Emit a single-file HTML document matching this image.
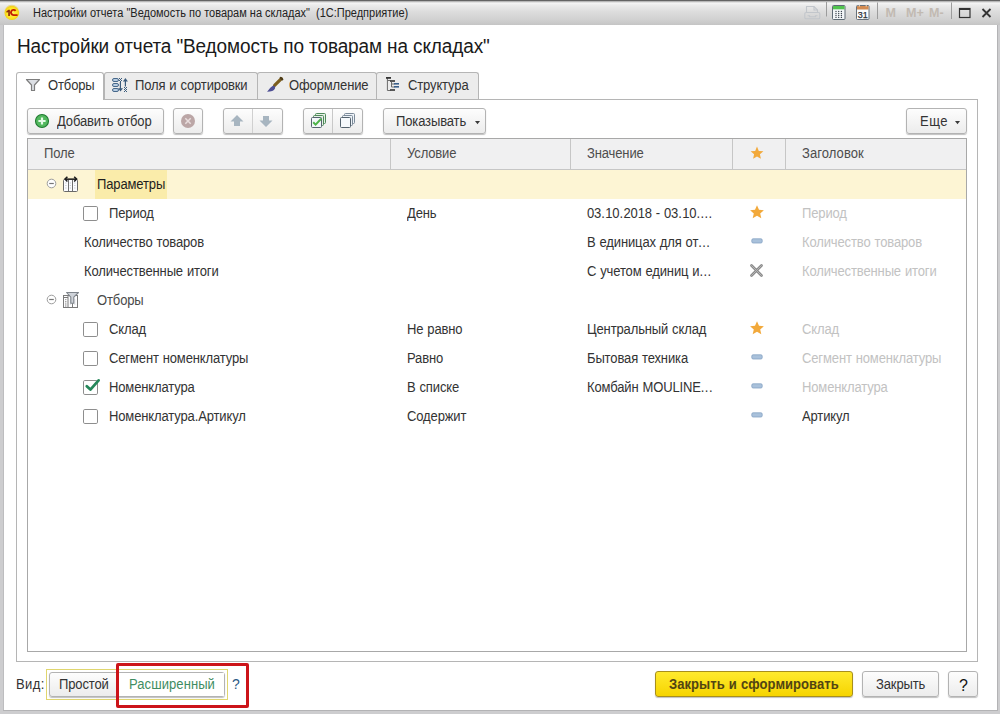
<!DOCTYPE html>
<html><head><meta charset="utf-8">
<style>
*{margin:0;padding:0;box-sizing:border-box}
html,body{width:1000px;height:714px;overflow:hidden;background:#cdcdcf;font-family:"Liberation Sans",sans-serif;color:#333}
.a{position:absolute}
#tb{left:0;top:0;width:1000px;height:25px;background:linear-gradient(#5e5e5e 0,#6a6a6a 1px,#b8b8b8 1.5px,#f6f6f6 3px,#ececec 5px,#dcdcdc 12px,#d2d2d2 19px,#c7c7c7 24px,#c4c4c4 25px)}
#content{left:4px;top:25px;width:993px;height:685px;background:#fff}
.t13{font-size:14px;line-height:15px;white-space:nowrap;letter-spacing:-0.15px;word-spacing:0.5px;transform:scaleX(0.93);transform-origin:0 0}
.tab{height:27px;top:72px;border:1px solid #b5b5b5;border-bottom:none;border-radius:3px 3px 0 0;background:#ececec}
.btn{border:1px solid #b3b3b3;border-radius:3px;background:linear-gradient(#fdfdfd,#ececec);box-shadow:0 1px 1px rgba(0,0,0,.25)}
.hdr{color:#4d4d4d}
.vsep{width:1px;background:#c6c6c6}
.d{letter-spacing:0.45px}
</style></head><body>
<div id="tb" class="a"></div>
<div class="a" style="left:3px;top:25px;width:1px;height:686px;background:#bdbdbf"></div>
<div class="a" style="left:997px;top:25px;width:1px;height:686px;background:#b3b3b5"></div>
<div class="a" style="left:3px;top:710px;width:995px;height:1px;background:#b3b3b5"></div>
<div id="content" class="a"></div>

<!-- title bar -->
<svg class="a" style="left:3px;top:4px" width="18" height="18" viewBox="0 0 18 18">
  <defs><radialGradient id="lg" cx="50%" cy="55%" r="50%"><stop offset="0" stop-color="#fff46a"/><stop offset="0.65" stop-color="#ffe624"/><stop offset="0.9" stop-color="#f2d21c"/><stop offset="1" stop-color="#e9d78a"/></radialGradient></defs>
  <circle cx="8.8" cy="8.4" r="7.6" fill="url(#lg)"/>
  <path d="M3.2 7.4L5.4 5.7H6.9V11.9H5.2V7.9L3.8 8.7z" fill="#8e2c0a"/>
  <path d="M12.6 6.9A2.6 2.6 0 1 0 10.5 11.1H14.6" fill="none" stroke="#c41d02" stroke-width="1.9"/>
</svg>

<div class="a" style="left:33px;top:6.65px;font-size:12px;line-height:13px;white-space:nowrap;color:#222;transform:scaleX(0.916);transform-origin:0 0">Настройки отчета "Ведомость по товарам на складах"&nbsp; (1С:Предприятие)</div>

<!-- title bar tools -->
<svg class="a" style="left:800px;top:0" width="200" height="25">
  <!-- printer (disabled) -->
  <g fill="none" stroke="#c2c6cb" stroke-width="1.1">
    <path d="M6.5 12.5V6.5h7.5l3.5 3.5v2.5"/>
    <path d="M14 6.5v3.5h3.5"/>
    <rect x="4.8" y="12.5" width="15" height="6.3" rx="1.3"/>
    <path d="M7.5 15.8h2v1h6v-1h2"/>
  </g>
  <path d="M26.5 2v14.5" stroke="#9c9c9c"/>
  <!-- calculator -->
  <rect x="32.5" y="5.5" width="12.5" height="14" rx="1" fill="#f3f6f8" stroke="#5f6b75"/>
  <rect x="33" y="6" width="11.5" height="3.3" fill="#52c44f"/>
  <g fill="#3d4650"><circle cx="36" cy="11.4" r="0.7"/><circle cx="38.7" cy="11.4" r="0.7"/><circle cx="41.4" cy="11.4" r="0.7"/><circle cx="36" cy="13.5" r="0.7"/><circle cx="38.7" cy="13.5" r="0.7"/><circle cx="41.4" cy="13.5" r="0.7"/><circle cx="36" cy="15.5" r="0.7"/><circle cx="38.7" cy="15.5" r="0.7"/><circle cx="41.4" cy="15.5" r="0.7"/><circle cx="36" cy="17.4" r="0.7"/><circle cx="38.7" cy="17.4" r="0.7"/><circle cx="41.4" cy="17.4" r="0.7"/></g>
  <!-- calendar -->
  <rect x="56.5" y="5.5" width="12.5" height="14" rx="1" fill="#fbfcfd" stroke="#66707a"/>
  <rect x="57" y="6" width="11.5" height="3.5" fill="#d28b52"/>
  <path d="M59.3 4.6v2M66.2 4.6v2" stroke="#f2e2d0" stroke-width="1"/>
  <text x="62.8" y="17.6" font-family="Liberation Sans" font-size="9" text-anchor="middle" fill="#2e3338" stroke="#2e3338" stroke-width="0.25">31</text>
  <path d="M77.5 2.5v16.5" stroke="#9c9c9c"/>
  <text x="85.5" y="17.3" font-family="Liberation Sans" font-weight="bold" font-size="12.6" fill="#c2bab2">M</text>
  <text x="106" y="17.3" font-family="Liberation Sans" font-weight="bold" font-size="12.6" fill="#c2bab2">M+</text>
  <text x="129" y="17.3" font-family="Liberation Sans" font-weight="bold" font-size="12.6" fill="#c2bab2">M-</text>
  <path d="M151.5 2.5v16.5" stroke="#9c9c9c"/>
  <rect x="159.5" y="8.5" width="10.5" height="9" fill="none" stroke="#333" stroke-width="1.2"/>
  <path d="M159.5 9.2h10.5" stroke="#333" stroke-width="1.6"/>
  <path d="M182.5 9l8 8M190.5 9l-8 8" stroke="#333" stroke-width="1.8"/>
</svg>

<!-- big title -->
<div class="a" style="left:17px;top:35.3px;font-size:19.5px;line-height:22px;letter-spacing:-0.12px;color:#1a1a1a;white-space:nowrap;transform:scaleX(0.974);transform-origin:0 0">Настройки отчета "Ведомость по товарам на складах"</div>

<!-- panel -->
<div class="a" style="left:16px;top:99px;width:962px;height:563px;border:1px solid #b5b5b5;background:#fff"></div>

<!-- tabs -->
<div class="a tab" style="left:104px;width:154px"></div>
<div class="a tab" style="left:257px;width:120px"></div>
<div class="a tab" style="left:376px;width:103px"></div>
<div class="a tab" style="left:16px;width:88px;height:28px;background:#fff"></div>
<svg class="a" style="left:24px;top:76px" width="20" height="18"><path d="M2.5 3.5h13l-5 5.5v5.5h-3V9z" fill="#dcdfe4" stroke="#7e7e7e" stroke-width="1.2" stroke-linejoin="round"/></svg>
<div class="a t13" style="left:48px;top:78px">Отборы</div>
<svg class="a" style="left:108px;top:74px" width="24" height="22" viewBox="0 0 24 22">
  <g fill="#b8cde2" stroke="#47688a" stroke-width="1"><rect x="4.5" y="4.5" width="6" height="3" rx="1.5"/><rect x="4.5" y="9.5" width="6" height="3" rx="1.5"/><rect x="4.5" y="14.5" width="6" height="3" rx="1.5"/></g>
  <g fill="#3c5c7c"><rect x="11" y="4" width="1" height="1"/><rect x="13" y="4" width="1" height="1"/><rect x="12" y="5" width="1" height="1"/><rect x="11" y="6" width="1" height="1"/><rect x="13" y="6" width="1" height="1"/><rect x="12" y="7" width="1" height="1"/><rect x="11.8" y="8" width="1.2" height="7"/><path d="M10 14.2h5l-2.5 3.4z"/>
  <path d="M14.9 7.6h5l-2.5-3.6z"/><rect x="16.8" y="7" width="1.2" height="5.5"/><rect x="16" y="13" width="1" height="1"/><rect x="18" y="13" width="1" height="1"/><rect x="17" y="14" width="1" height="1"/><rect x="16" y="15" width="1" height="1"/><rect x="18" y="15" width="1" height="1"/><rect x="17" y="16" width="1" height="1"/><rect x="16" y="17" width="1" height="1"/><rect x="18" y="17" width="1" height="1"/></g>
</svg>
<div class="a t13" style="left:135px;top:78px">Поля и сортировки</div>
<svg class="a" style="left:262px;top:74px" width="24" height="22" viewBox="0 0 24 22">
  <path d="M19.4 4.6L12.6 11.4" stroke="#7b5d1e" stroke-width="3.2" stroke-linecap="round"/>
  <path d="M18.6 3.8l1.8 1.6" stroke="#4a3a1a" stroke-width="2" stroke-linecap="round"/>
  <path d="M10.2 12.2c1.8-1.2 3.6.4 2.8 2.2-.9 2.1-3.8 3.1-8 3.4 1.6-1.3 2.8-4.2 5.2-5.6z" fill="#4d4e94"/>
</svg>
<div class="a t13" style="left:289px;top:78px">Оформление</div>
<svg class="a" style="left:380px;top:74px" width="24" height="22" viewBox="0 0 24 22">
  <path d="M7.4 4v12.5h3M7.4 6.5h3M11.5 8v5h3M11.5 10h3" fill="none" stroke="#6b6b6b" stroke-width="1"/>
  <g fill="#333"><rect x="6" y="3" width="5" height="1.8"/><rect x="10" y="6.2" width="5" height="1.6"/><rect x="10" y="15.2" width="5" height="1.6"/></g>
  <g fill="#3a5f8a"><rect x="14" y="9" width="5" height="1.6"/><rect x="14" y="12" width="5" height="1.6"/></g>
</svg>
<div class="a t13" style="left:408px;top:78px">Структура</div>

<!-- toolbar -->
<div class="a btn" style="left:27px;top:108px;width:137px;height:26px"></div>
<svg class="a" style="left:34px;top:113px" width="16" height="16"><circle cx="8" cy="8" r="6.5" fill="#52b85e" stroke="#1f7a30" stroke-width="1.1"/><path d="M8 4.4v7.2M4.4 8h7.2" stroke="#e6fbe8" stroke-width="2.2"/></svg>
<div class="a t13" style="left:57px;top:114px">Добавить отбор</div>
<div class="a btn" style="left:173px;top:108px;width:30px;height:26px"></div>
<svg class="a" style="left:180px;top:113px" width="16" height="16"><circle cx="8" cy="8" r="7" fill="#bba6a6"/><path d="M5.3 5.3l5.4 5.4M10.7 5.3l-5.4 5.4" stroke="#e9dede" stroke-width="1.5"/></svg>
<div class="a btn" style="left:223px;top:108px;width:60px;height:26px"></div>
<div class="a vsep" style="left:252px;top:109px;height:24px;background:#d0d0d0"></div>
<svg class="a" style="left:229px;top:113px" width="16" height="16"><path d="M8 2l6.5 6.5H11v4.5H5V8.5H1.5z" fill="#a7b5c0"/></svg>
<svg class="a" style="left:258px;top:113px" width="16" height="16"><path d="M8 14l6.5-6.5H11V3H5v4.5H1.5z" fill="#a7b5c0"/></svg>
<div class="a btn" style="left:303px;top:108px;width:60px;height:26px"></div>
<div class="a vsep" style="left:332px;top:109px;height:24px;background:#c8c8c8"></div>
<svg class="a" style="left:308px;top:110px" width="22" height="22" viewBox="0 0 22 22">
  <rect x="7.5" y="3.5" width="10" height="10" rx="1" fill="#e6f0e6" stroke="#4e8a5a"/>
  <rect x="5.5" y="5.5" width="10" height="10" rx="1" fill="#e6f0e6" stroke="#4e8a5a"/>
  <rect x="3.5" y="7.5" width="10" height="10" rx="1" fill="#f3f7fa" stroke="#55636f"/>
  <path d="M5.2 12.2l2.4 2.4 5.6-5.8" fill="none" stroke="#4db348" stroke-width="2"/>
</svg>
<svg class="a" style="left:337px;top:110px" width="22" height="22" viewBox="0 0 22 22">
  <rect x="7.5" y="3.5" width="10" height="10" rx="1" fill="#eef3f8" stroke="#7b8a99"/>
  <rect x="5.5" y="5.5" width="10" height="10" rx="1" fill="#eef3f8" stroke="#7b8a99"/>
  <rect x="3.5" y="7.5" width="10" height="10" rx="1" fill="#f6f9fc" stroke="#55636f"/>
</svg>
<div class="a btn" style="left:383px;top:108px;width:103px;height:26px"></div>
<div class="a t13" style="left:396px;top:114px">Показывать</div>
<svg class="a" style="left:474.5px;top:121px" width="6" height="4"><path d="M0 0h5l-2.5 3.2z" fill="#3a3a3a"/></svg>
<div class="a btn" style="left:906px;top:108px;width:61px;height:26px"></div>
<div class="a t13" style="left:920px;top:113.5px;letter-spacing:0.6px">Еще</div>
<svg class="a" style="left:955px;top:121px" width="6" height="4"><path d="M0 0h5l-2.5 3.2z" fill="#3a3a3a"/></svg>

<!-- table -->
<div class="a" style="left:27px;top:138px;width:940px;height:514px;border:1px solid #a8a8a8;background:#fff"></div>
<div class="a" style="left:28px;top:139px;width:938px;height:31px;background:#f0f0f1;border-bottom:1px solid #c6c6c6"></div>
<div class="a vsep" style="left:390px;top:139px;height:30px"></div>
<div class="a vsep" style="left:570px;top:139px;height:30px"></div>
<div class="a vsep" style="left:732px;top:139px;height:30px"></div>
<div class="a vsep" style="left:785px;top:139px;height:30px"></div>
<div class="a" style="left:28px;top:170px;width:938px;height:29px;background:#fdf5d4"></div>
<div class="a t13 hdr" style="left:44px;top:146px">Поле</div>
<div class="a t13 hdr" style="left:407px;top:146px">Условие</div>
<div class="a t13 hdr" style="left:587px;top:146px">Значение</div>
<svg class="a" style="left:749px;top:145px" width="16" height="16" viewBox="0 0 16 16"><path d="M8 1.6l1.8 4.3 4.6.4-3.5 3 1 4.5L8 11.5l-3.9 2.3 1-4.5-3.5-3 4.6-.4z" fill="#f2a93b"/></svg>
<div class="a t13 hdr" style="left:802px;top:146px;letter-spacing:0.07px">Заголовок</div>

<svg class="a" style="left:46px;top:178px" width="11" height="11"><circle cx="5.5" cy="5.5" r="4.3" fill="#fff" stroke="#9c9c9c" stroke-width="1"/><path d="M3.2 5.5h4.6" stroke="#777" stroke-width="1.2"/></svg>
<div class="a" style="left:95px;top:170px;width:72px;height:29px;background:#faecaa"></div>
<svg class="a" style="left:62px;top:175px" width="18" height="18" viewBox="0 0 18 18"><rect x="1.5" y="4.5" width="14" height="12" rx="1" fill="#fbfcfe" stroke="#6a6a6a"/><path d="M6.5 5v11M10.5 5v11" stroke="#707070" stroke-width="1"/><path d="M3.3 8h1.2M3.3 10.5h1.2M3.3 13h1.2M7.7 8h1.2M7.7 10.5h1.2M7.7 13h1.2M12.2 8h1.2M12.2 10.5h1.2M12.2 13h1.2" stroke="#c3c8d2" stroke-width="1"/><path d="M3.2 4.1h11.2" stroke="#1c1c1c" stroke-width="1.4"/><path d="M5.4 1.7L3 4.1l2.4 2.4M12.2 1.7l2.4 2.4-2.4 2.4" stroke="#1c1c1c" stroke-width="1.5" fill="none"/></svg>
<div class="a t13" style="left:97px;top:177px;color:#1e1e1e">Параметры</div>
<svg class="a" style="left:82px;top:205px" width="17" height="17"><rect x="1.5" y="1.5" width="14" height="14" rx="1.3" fill="#fff" stroke="#8e8e8e"/></svg>
<div class="a t13" style="left:109px;top:206px">Период</div>
<div class="a t13" style="left:407px;top:206px">День</div>
<div class="a t13" style="left:587px;top:206px">03<span class="d">.</span>10<span class="d">.</span>2018 - 03<span class="d">.</span>10<span class="d">.</span><span class="d">.</span><span class="d">.</span><span class="d">.</span></div>
<svg class="a" style="left:749px;top:204px" width="16" height="16" viewBox="0 0 16 16"><path d="M8 1.2l2 4.6 4.9.4-3.7 3.2 1.1 4.8L8 11.7l-4.3 2.5 1.1-4.8L1.1 6.2l4.9-.4z" fill="#f2a93b"/></svg>
<div class="a t13" style="left:802px;top:206px;color:#c2c2c2">Период</div>
<div class="a t13" style="left:84px;top:235px">Количество товаров</div>
<div class="a t13" style="left:587px;top:235px">В единицах для от<span class="d">.</span><span class="d">.</span><span class="d">.</span></div>
<svg class="a" style="left:751px;top:238px" width="12" height="6"><rect x="0.8" y="0.8" width="10.4" height="4.2" rx="1.3" fill="#a9c1db" stroke="#86a3c4" stroke-width="0.8"/></svg>
<div class="a t13" style="left:802px;top:235px;color:#c2c2c2">Количество товаров</div>
<div class="a t13" style="left:84px;top:264px">Количественные итоги</div>
<div class="a t13" style="left:587px;top:264px">С учетом единиц и<span class="d">.</span><span class="d">.</span><span class="d">.</span></div>
<svg class="a" style="left:749px;top:263px" width="15" height="15"><path d="M2.5 2.5l10 10M12.5 2.5l-10 10" stroke="#8a8a8a" stroke-width="2.8" stroke-linecap="round"/><path d="M2.5 2.5l10 10M12.5 2.5l-10 10" stroke="#b4b4b4" stroke-width="1" stroke-linecap="round"/></svg>
<div class="a t13" style="left:802px;top:264px;color:#c2c2c2">Количественные итоги</div>
<svg class="a" style="left:46px;top:294px" width="11" height="11"><circle cx="5.5" cy="5.5" r="4.3" fill="#fff" stroke="#9c9c9c" stroke-width="1"/><path d="M3.2 5.5h4.6" stroke="#777" stroke-width="1.2"/></svg>
<svg class="a" style="left:62px;top:291px" width="18" height="18" viewBox="0 0 18 18"><rect x="1.5" y="4.5" width="14" height="12" fill="#fdfdfe" stroke="#7a7a7a"/><path d="M1.5 6.5h4.5M6 5v11M10.5 8v8" stroke="#7a7a7a" stroke-width="1"/><g fill="#888"><circle cx="3.8" cy="8.6" r="0.7"/><circle cx="3.8" cy="10.8" r="0.7"/><circle cx="3.8" cy="13" r="0.7"/><circle cx="3.8" cy="15" r="0.7"/></g><path d="M7.8 9h1.2M7.8 11h1.2M7.8 13h1.2M12.2 9h1.2M12.2 11h1.2M12.2 13h1.2" stroke="#c8ccd3" stroke-width="1"/><path d="M4.6 1.5H16.5L11.8 6.2V12.3H8.8V6.2Z" fill="#cfd3d9" stroke="#7f858c" stroke-width="1.1" stroke-linejoin="round"/></svg>
<div class="a t13" style="left:97px;top:293px;color:#4a4a4a">Отборы</div>
<svg class="a" style="left:82px;top:321px" width="17" height="17"><rect x="1.5" y="1.5" width="14" height="14" rx="1.3" fill="#fff" stroke="#8e8e8e"/></svg>
<div class="a t13" style="left:109px;top:322px">Склад</div>
<div class="a t13" style="left:407px;top:322px">Не равно</div>
<div class="a t13" style="left:587px;top:322px">Центральный склад</div>
<svg class="a" style="left:749px;top:320px" width="16" height="16" viewBox="0 0 16 16"><path d="M8 1.2l2 4.6 4.9.4-3.7 3.2 1.1 4.8L8 11.7l-4.3 2.5 1.1-4.8L1.1 6.2l4.9-.4z" fill="#f2a93b"/></svg>
<div class="a t13" style="left:802px;top:322px;color:#c2c2c2">Склад</div>
<svg class="a" style="left:82px;top:350px" width="17" height="17"><rect x="1.5" y="1.5" width="14" height="14" rx="1.3" fill="#fff" stroke="#8e8e8e"/></svg>
<div class="a t13" style="left:109px;top:351px">Сегмент номенклатуры</div>
<div class="a t13" style="left:407px;top:351px">Равно</div>
<div class="a t13" style="left:587px;top:351px">Бытовая техника</div>
<svg class="a" style="left:751px;top:354px" width="12" height="6"><rect x="0.8" y="0.8" width="10.4" height="4.2" rx="1.3" fill="#a9c1db" stroke="#86a3c4" stroke-width="0.8"/></svg>
<div class="a t13" style="left:802px;top:351px;color:#c2c2c2">Сегмент номенклатуры</div>
<svg class="a" style="left:82px;top:379px" width="17" height="17"><rect x="1.5" y="1.5" width="14" height="14" rx="1.3" fill="#fff" stroke="#8e8e8e"/></svg>
<svg class="a" style="left:84px;top:378px" width="17" height="15"><path d="M2.8 8.2l3.6 3.4L14.6 2.4" fill="none" stroke="#25875a" stroke-width="2.8" stroke-linecap="round" stroke-linejoin="round"/></svg>
<div class="a t13" style="left:109px;top:380px">Номенклатура</div>
<div class="a t13" style="left:407px;top:380px">В списке</div>
<div class="a t13" style="left:587px;top:380px">Комбайн MOULINE<span class="d">.</span><span class="d">.</span><span class="d">.</span></div>
<svg class="a" style="left:751px;top:383px" width="12" height="6"><rect x="0.8" y="0.8" width="10.4" height="4.2" rx="1.3" fill="#a9c1db" stroke="#86a3c4" stroke-width="0.8"/></svg>
<div class="a t13" style="left:802px;top:380px;color:#c2c2c2">Номенклатура</div>
<svg class="a" style="left:82px;top:408px" width="17" height="17"><rect x="1.5" y="1.5" width="14" height="14" rx="1.3" fill="#fff" stroke="#8e8e8e"/></svg>
<div class="a t13" style="left:109px;top:409px">Номенклатура.Артикул</div>
<div class="a t13" style="left:407px;top:409px">Содержит</div>
<svg class="a" style="left:751px;top:412px" width="12" height="6"><rect x="0.8" y="0.8" width="10.4" height="4.2" rx="1.3" fill="#a9c1db" stroke="#86a3c4" stroke-width="0.8"/></svg>
<div class="a t13" style="left:802px;top:409px;color:#333">Артикул</div>

<!-- bottom -->
<div class="a t13" style="left:16px;top:677px;letter-spacing:0.4px">Вид:</div>
<div class="a" style="left:46px;top:669px;width:182px;height:31px;border:1px solid #e0d66e"></div>
<div class="a btn" style="left:49px;top:672px;width:176px;height:25px"></div>
<div class="a" style="left:117px;top:673px;width:107px;height:23px;background:#fff"></div>
<div class="a t13" style="left:59px;top:677px">Простой</div>
<div class="a t13" style="left:129px;top:677px;color:#3f8d62;letter-spacing:0.07px">Расширенный</div>
<div class="a" style="left:232px;top:676px;font-size:14px;line-height:16px;color:#2c5a85">?</div>
<div class="a" style="left:116px;top:663px;width:133px;height:45px;border:3px solid #cc1419;border-radius:2px"></div>

<div class="a btn" style="left:655px;top:671px;width:198px;height:26px;background:linear-gradient(#ffea2e,#f6d400);border-color:#a88f1c"></div>
<div class="a t13" style="left:669px;top:677px;font-weight:bold;color:#524512;letter-spacing:0.05px">Закрыть и сформировать</div>
<div class="a btn" style="left:862px;top:671px;width:77px;height:26px"></div>
<div class="a t13" style="left:876px;top:677px">Закрыть</div>
<div class="a btn" style="left:948px;top:671px;width:30px;height:26px"></div>
<div class="a" style="left:959px;top:676.5px;font-size:16px;line-height:17px;color:#111">?</div>
</body></html>
